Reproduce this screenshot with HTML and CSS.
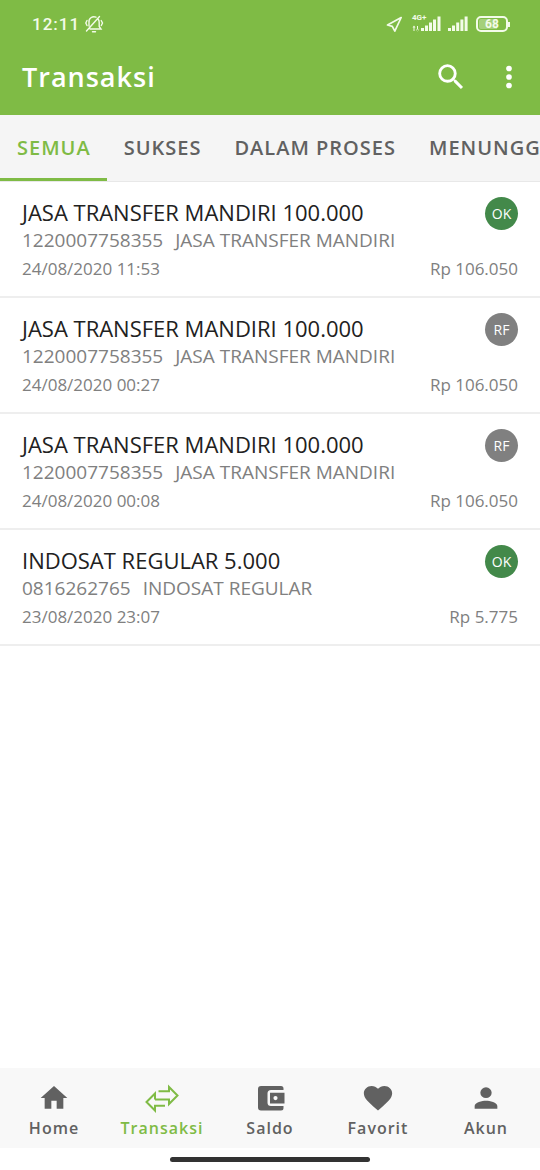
FILE: index.html
```html
<!DOCTYPE html>
<html lang="id">
<head>
<meta charset="utf-8">
<meta name="viewport" content="width=device-width, initial-scale=1">
<title>Transaksi</title>
<link rel="stylesheet" href="styles.css">
</head>
<body>
<div class="app">
  <header class="header">
    <div class="status">
      <span class="clock">12:11</span>
      <svg class="bell" viewBox="0 0 20 20" width="20" height="20" fill="none" stroke="currentColor" stroke-width="1.4" stroke-linecap="round">
        <path d="M6 15h11l-1.800-2.500V8.500A5 5 0 0 0 14 5M12 3.200A5 5 0 0 0 5 8.500V12M8.500 17.700h3M2.500 17 15.500 2.500M3 6.500 1.800 9l1.200 2.500M17.200 6.500 18.500 9l-1.200 2.500"/>
      </svg>
      <span class="status-space"></span>
      <svg class="locate" viewBox="0 0 17 17" width="17" height="17" fill="none" stroke="currentColor" stroke-width="1.7" stroke-linejoin="round"><path d="M15.200 1.500 1.500 9l4.800 1.400 2.500 4.800z"/></svg>
      <span class="network">
        <span class="network-type">4G+</span>
        <svg class="signal" viewBox="0 0 29 18" width="29" height="18" fill="currentColor"><path d="M1.500 11h1v5h-1zM0.500 12.500 2 10.500l1.500 2zM5 11h1v5H5zM4 14.500l1.500 2 1.500-2zM9 13h3v3H9zM13 10.500h3V16h-3zM17 7.500h3V16h-3zM21 4.500h3V16h-3zM25.500 1.500h3V16h-3z"/></svg>
      </span>
      <svg class="signal-two" viewBox="0 0 20 18" width="20" height="18" fill="currentColor"><path d="M0 13h3v3H0zM4 10.500h3V16H4zM8.200 7.500h3V16h-3zM12.400 4.500h3V16h-3zM16.600 1.500h3V16h-3z"/></svg>
      <span class="battery"><span class="battery-level">68</span></span>
    </div>
    <div class="toolbar">
      <h1 class="title">Transaksi</h1>
      <button class="icon-button" aria-label="Cari"><svg viewBox="0 0 24 24" width="34" height="34" fill="currentColor"><path d="M15.500 14h-.79l-.28-.27A6.470 6.470 0 0 0 16 9.500 6.500 6.500 0 1 0 9.500 16c1.610 0 3.090-.59 4.230-1.570l.27.28v.79l5 4.990L20.490 19l-4.990-5zm-6 0a4.500 4.500 0 1 1 0-9 4.500 4.500 0 0 1 0 9z"/></svg></button>
      <button class="icon-button" aria-label="Menu"><svg viewBox="0 0 24 24" width="34" height="34" fill="currentColor"><circle cx="12" cy="6" r="2"/><circle cx="12" cy="12" r="2"/><circle cx="12" cy="18" r="2"/></svg></button>
    </div>
  </header>
  <div class="tabs" role="tablist">
    <button class="tab tab-active" role="tab" aria-selected="true">SEMUA</button>
    <button class="tab" role="tab" aria-selected="false">SUKSES</button>
    <button class="tab" role="tab" aria-selected="false">DALAM PROSES</button>
    <button class="tab" role="tab" aria-selected="false">MENUNGGU</button>
  </div>
  <main class="list">
    <article class="item">
      <div class="row"><h2 class="name">JASA TRANSFER MANDIRI 100.000</h2><span class="badge badge-ok">OK</span></div>
      <p class="detail"><span>1220007758355</span><span>JASA TRANSFER MANDIRI</span></p>
      <div class="row meta"><time>24/08/2020 11:53</time><span>Rp 106.050</span></div>
    </article>
    <article class="item">
      <div class="row"><h2 class="name">JASA TRANSFER MANDIRI 100.000</h2><span class="badge">RF</span></div>
      <p class="detail"><span>1220007758355</span><span>JASA TRANSFER MANDIRI</span></p>
      <div class="row meta"><time>24/08/2020 00:27</time><span>Rp 106.050</span></div>
    </article>
    <article class="item">
      <div class="row"><h2 class="name">JASA TRANSFER MANDIRI 100.000</h2><span class="badge">RF</span></div>
      <p class="detail"><span>1220007758355</span><span>JASA TRANSFER MANDIRI</span></p>
      <div class="row meta"><time>24/08/2020 00:08</time><span>Rp 106.050</span></div>
    </article>
    <article class="item">
      <div class="row"><h2 class="name">INDOSAT REGULAR 5.000</h2><span class="badge badge-ok">OK</span></div>
      <p class="detail"><span>0816262765</span><span>INDOSAT REGULAR</span></p>
      <div class="row meta"><time>23/08/2020 23:07</time><span>Rp 5.775</span></div>
    </article>
  </main>
  <nav class="nav">
    <a class="nav-link" href="#home"><svg viewBox="0 0 24 24" width="32" height="32" fill="currentColor"><path d="M10 20v-6h4v6h5v-8h3L12 3 2 12h3v8z"/></svg>Home</a>
    <a class="nav-link nav-active" href="#transaksi" aria-current="page"><svg viewBox="0 0 36 32" width="36" height="32" fill="none" stroke="currentColor" stroke-width="2"><path d="M14.500 9.300H25V5l8.500 8.500-8.500 8.500v-4.500H11M21 23.800H11v4.700L2.500 20l8.500-8.500v6"/></svg>Transaksi</a>
    <a class="nav-link" href="#saldo"><svg viewBox="0 0 32 32" width="32" height="32" fill="currentColor"><path fill-rule="evenodd" d="M7 4h20a2.500 2.500 0 0 1 2.500 2.500V8H17a3.500 3.500 0 0 0-3.500 3.500v9A3.500 3.500 0 0 0 17 24h12.500v2a2.500 2.500 0 0 1-2.500 2.500H7A3 3 0 0 1 4 25.500V7a3 3 0 0 1 3-3zM16 10.700h14.500v10.800H16zM21.500 14a2.100 2.100 0 1 0 0 4.200 2.100 2.100 0 0 0 0-4.200z"/></svg>Saldo</a>
    <a class="nav-link" href="#favorit"><svg viewBox="0 0 24 24" width="34" height="32" preserveAspectRatio="none" fill="currentColor"><path d="m12 21.350-1.450-1.320C5.400 15.360 2 12.280 2 8.500 2 5.420 4.420 3 7.500 3c1.740 0 3.410.81 4.500 2.090C13.090 3.810 14.760 3 16.500 3 19.580 3 22 5.420 22 8.500c0 3.780-3.400 6.860-8.550 11.540z"/></svg>Favorit</a>
    <a class="nav-link" href="#akun"><svg viewBox="0 0 24 24" width="34" height="32" preserveAspectRatio="none" fill="currentColor"><path d="M12 12a4 4 0 1 0 0-8 4 4 0 0 0 0 8zm0 2c-2.670 0-8 1.340-8 4v2h16v-2c0-2.660-5.330-4-8-4z"/></svg>Akun</a>
  </nav>
  <div class="gesture"><span class="gesture-bar"></span></div>
</div>
</body>
</html>
```

FILE: styles.css
```css
* { box-sizing: border-box; }
body {
  margin: 0;
  background: #fff;
  color: #616161;
  font-family: "Open Sans", "Noto Sans", sans-serif;
}
button {
  border: 0;
  padding: 0;
  background: none;
  color: inherit;
  font: inherit;
}
h1, h2, p { margin: 0; }
svg { display: block; flex: none; }
.app {
  display: flex;
  flex-direction: column;
  min-height: 100vh;
}
.header {
  background: #7fbb45;
  color: #fff;
}
.status {
  display: flex;
  align-items: center;
  height: 48px;
  padding: 0 32px;
  color: #f3fbe9;
}
.clock {
  font: 500 17px/20px Roboto, sans-serif;
  letter-spacing: 1px;
}
.bell { margin-left: 4px; }
.status-space { flex: 1; }
.locate { margin-right: 9px; }
.network {
  position: relative;
  margin-right: 7px;
}
.network-type {
  position: absolute;
  top: -2px;
  left: 0;
  font: 700 8px/10px Roboto, sans-serif;
}
.signal-two { margin-right: 8px; }
.battery {
  position: relative;
  width: 32px;
  height: 16px;
  padding: 1px;
  border: 2px solid currentColor;
  border-radius: 5px;
}
.battery::after {
  content: "";
  position: absolute;
  top: 4px;
  right: -4px;
  width: 2px;
  height: 5px;
  background: currentColor;
}
.battery-level {
  display: block;
  border-radius: 2px;
  background: linear-gradient(90deg, #a5d07b 68%, transparent 68%);
  font: 700 12px/10px Roboto, sans-serif;
  text-align: center;
}
.toolbar {
  display: flex;
  align-items: center;
  gap: 24px;
  height: 67px;
  padding: 0 14px 10px 22px;
}
.title {
  flex: 1;
  font-size: 27px;
  font-weight: 600;
  letter-spacing: 1px;
  line-height: 36px;
}
.tabs {
  display: flex;
  height: 67px;
  overflow-x: auto;
  overflow-y: hidden;
  scrollbar-width: none;
  border-bottom: 1px solid #e8e8e8;
  background: #f5f5f5;
}
.tab {
  flex: none;
  padding: 2px 16px 0 17px;
  border-bottom: 3px solid transparent;
  font-size: 20px;
  font-weight: 600;
  letter-spacing: 1px;
  white-space: nowrap;
}
.tab-active {
  border-color: #7fbb45;
  color: #7fbb45;
}
.list { flex: 1; }
.item {
  padding: 15px 22px 14px;
  border-bottom: 2px solid #eee;
}
.row {
  display: flex;
  align-items: flex-start;
  justify-content: space-between;
}
.name {
  color: #212121;
  font-size: 22px;
  font-weight: 400;
  line-height: 31px;
}
.badge {
  width: 33px;
  height: 33px;
  border-radius: 50%;
  background: #808080;
  color: #fff;
  font-size: 14px;
  line-height: 33px;
  text-align: center;
}
.badge-ok { background: #43894a; }
.detail {
  display: flex;
  gap: 12px;
  color: #808080;
  font-size: 19px;
  line-height: 20px;
}
.meta {
  padding-top: 6px;
  color: #808080;
  font-size: 17px;
  line-height: 26px;
}
.nav {
  display: grid;
  grid-template-columns: repeat(5, 1fr);
  background: #f8f8f8;
}
.nav-link {
  display: flex;
  flex-direction: column;
  align-items: center;
  padding: 14px 0 6px;
  color: #616161;
  font-size: 16px;
  font-weight: 600;
  letter-spacing: 1px;
  line-height: 28px;
  text-decoration: none;
}
.nav-active { color: #7fbb45; }
.gesture {
  display: flex;
  align-items: center;
  justify-content: center;
  height: 22px;
}
.gesture-bar {
  width: 37%;
  height: 5px;
  border-radius: 3px;
  background: #333;
}
```
